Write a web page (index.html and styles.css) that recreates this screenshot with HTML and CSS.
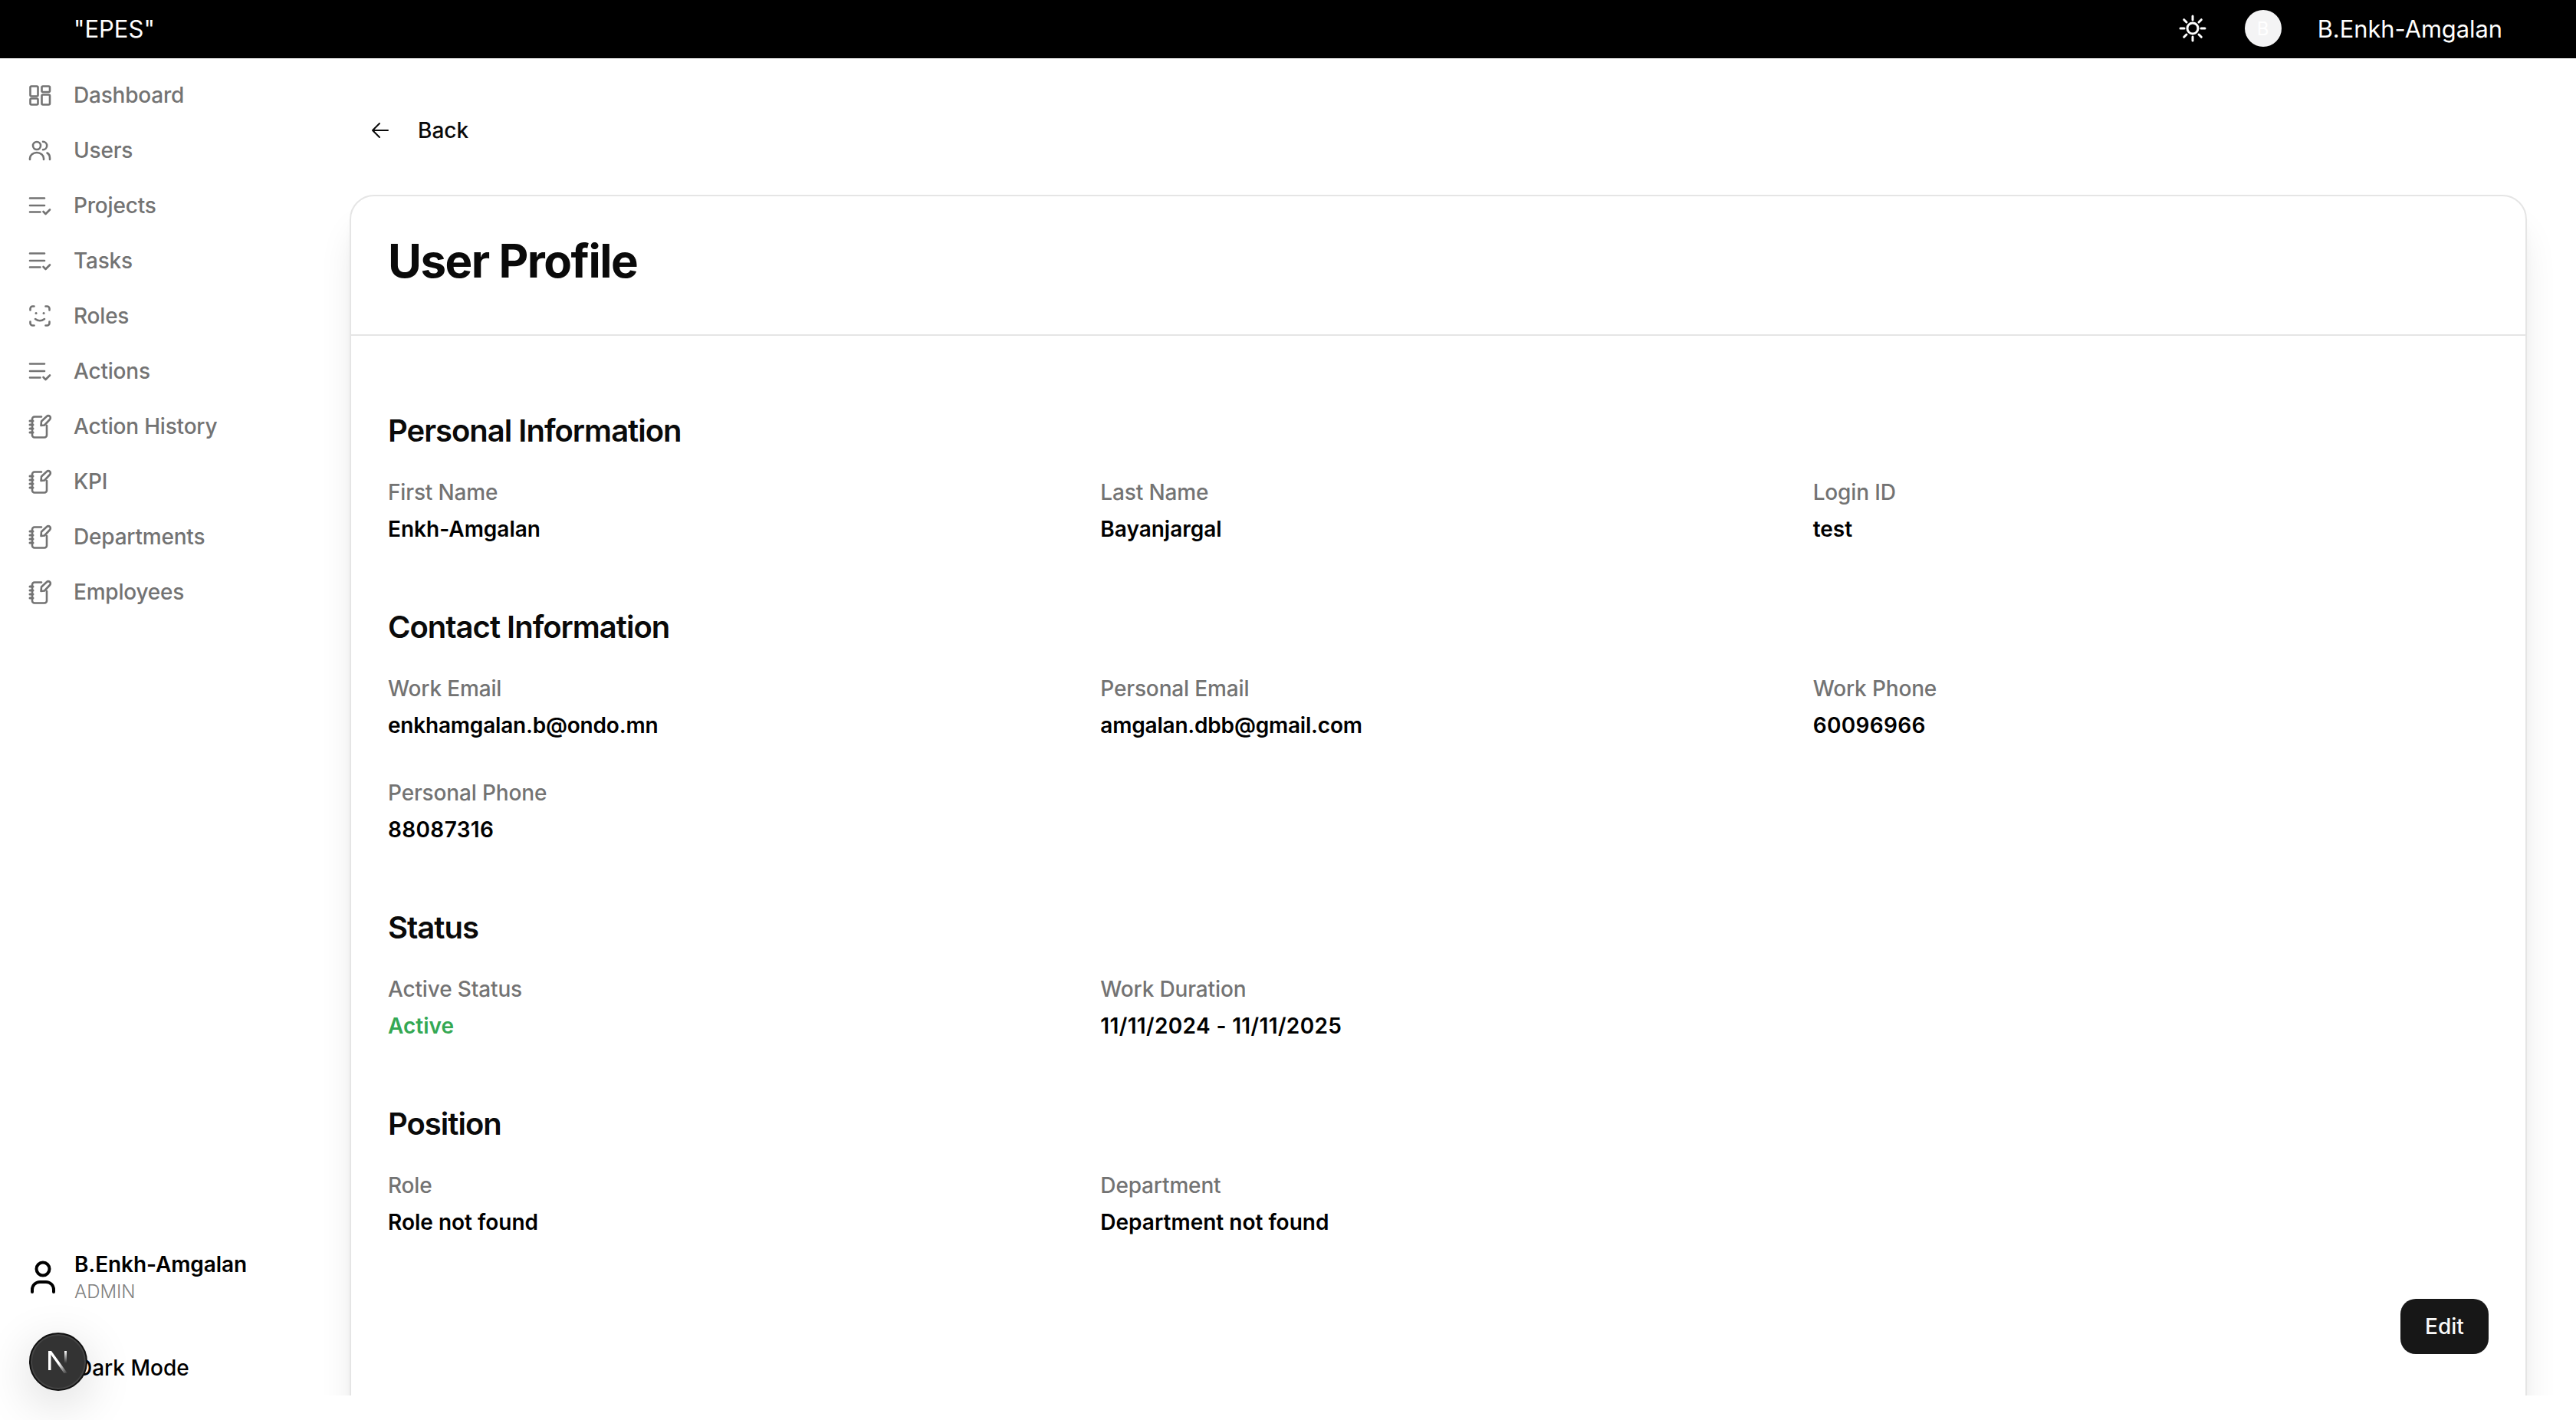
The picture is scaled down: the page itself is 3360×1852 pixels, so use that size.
FILE: index.html
```html
<!DOCTYPE html>
<html lang="en">
<head>
<meta charset="utf-8">
<title>User Profile</title>
<link rel="stylesheet" href="styles.css">
</head>
<body>
<svg class="defs" width="0" height="0" aria-hidden="true">
  <symbol id="i-dash" viewBox="0 0 32 32"><rect x="3.500" y="4.500" width="10" height="13" rx="1.500"/><rect x="3.500" y="20.500" width="10" height="8" rx="1.500"/><rect x="18.500" y="4.500" width="10.500" height="7.500" rx="1.500"/><rect x="18.500" y="15.500" width="10.500" height="13" rx="1.500"/></symbol>
  <symbol id="i-users" viewBox="0 0 32 32"><circle cx="12" cy="10" r="5"/><path d="M3 28v-1.500a9 7.500 0 0 1 18 0V28"/><path d="M20 4.800a5.200 5.200 0 0 1 0 10.400"/><path d="M25.500 19.500c2.300 1.300 3.500 3.700 3.500 6.500v2"/></symbol>
  <symbol id="i-list" viewBox="0 0 32 32"><path d="M3 6.500h19M3 16h19M3 24.500h13.500"/><path d="M20.500 24l3 3 5.500-5.500"/></symbol>
  <symbol id="i-face" viewBox="0 0 32 32"><path d="M3.500 8.500V6.500a3 3 0 0 1 3-3H8.500M23.500 3.500h2a3 3 0 0 1 3 3v2M28.500 23.500v2a3 3 0 0 1-3 3h-2M8.500 28.500h-2a3 3 0 0 1-3-3v-2"/><path d="M10 20q6 4.500 12 0"/><path class="dot" d="M11 12.500h.1M21 12.500h.1"/></symbol>
  <symbol id="i-note" viewBox="0 0 32 32"><path d="M18 3.500H9a3 3 0 0 0-3 3v21a3 3 0 0 0 3 3h13a3 3 0 0 0 3-3V15"/><path class="beads" d="M3 9h4M3 14h4M3 19h4M3 24h4"/><path d="M18 9.500l7-6.500a2.800 2.800 0 0 1 4 4l-7 7.500-4.500.5z"/></symbol>
</svg>

<div class="page">
  <header class="topbar">
    <span class="brand">"EPES"</span>
    <div class="topbar-right">
      <svg class="sun" viewBox="0 0 36 36"><circle cx="18" cy="18" r="7"/><path d="M18 2v5M18 29v5M2 18h5M29 18h5M6.700 6.700l3.300 3.300M26 26l3.300 3.300M6.700 29.300l3.300-3.300M26 10l3.300-3.300"/></svg>
      <span class="avatar">B</span>
      <span class="topbar-name">B.Enkh-Amgalan</span>
    </div>
  </header>

  <div class="shell">
    <aside class="sidebar">
      <nav class="nav">
        <a class="nav-item"><svg class="nav-icon"><use href="#i-dash"/></svg>Dashboard</a>
        <a class="nav-item"><svg class="nav-icon"><use href="#i-users"/></svg>Users</a>
        <a class="nav-item"><svg class="nav-icon"><use href="#i-list"/></svg>Projects</a>
        <a class="nav-item"><svg class="nav-icon"><use href="#i-list"/></svg>Tasks</a>
        <a class="nav-item"><svg class="nav-icon"><use href="#i-face"/></svg>Roles</a>
        <a class="nav-item"><svg class="nav-icon"><use href="#i-list"/></svg>Actions</a>
        <a class="nav-item"><svg class="nav-icon"><use href="#i-note"/></svg>Action History</a>
        <a class="nav-item"><svg class="nav-icon"><use href="#i-note"/></svg>KPI</a>
        <a class="nav-item"><svg class="nav-icon"><use href="#i-note"/></svg>Departments</a>
        <a class="nav-item"><svg class="nav-icon"><use href="#i-note"/></svg>Employees</a>
      </nav>
      <div class="side-foot">
        <div class="side-user">
          <svg class="person" viewBox="0 0 36 44"><circle cx="18" cy="12" r="8.500"/><path d="M4 42v-3a10 10 0 0 1 10-10h8a10 10 0 0 1 10 10v3"/></svg>
          <div class="side-user-text">
            <div class="side-name">B.Enkh-Amgalan</div>
            <div class="side-role">ADMIN</div>
          </div>
        </div>
        <div class="dark-mode">Dark Mode</div>
      </div>
    </aside>

    <main class="main">
      <a class="back">
        <svg class="back-icon" viewBox="0 0 24 24"><path d="M22 12H2M11 3l-9 9 9 9"/></svg>
        Back
      </a>
      <section class="card">
        <div class="card-head"><h1 class="title">User Profile</h1></div>
        <div class="card-body">
          <div class="group">
            <h2 class="group-title">Personal Information</h2>
            <div class="fields">
              <div class="field"><div class="label">First Name</div><div class="value">Enkh-Amgalan</div></div>
              <div class="field"><div class="label">Last Name</div><div class="value">Bayanjargal</div></div>
              <div class="field"><div class="label">Login ID</div><div class="value">test</div></div>
            </div>
          </div>
          <div class="group">
            <h2 class="group-title">Contact Information</h2>
            <div class="fields">
              <div class="field"><div class="label">Work Email</div><div class="value value-mail">enkhamgalan.b@ondo.mn</div></div>
              <div class="field"><div class="label">Personal Email</div><div class="value value-mail">amgalan.dbb@gmail.com</div></div>
              <div class="field"><div class="label">Work Phone</div><div class="value value-num">60096966</div></div>
              <div class="field"><div class="label">Personal Phone</div><div class="value value-num">88087316</div></div>
            </div>
          </div>
          <div class="group">
            <h2 class="group-title">Status</h2>
            <div class="fields">
              <div class="field"><div class="label">Active Status</div><div class="value value-ok">Active</div></div>
              <div class="field"><div class="label">Work Duration</div><div class="value value-num">11/11/2024 - 11/11/2025</div></div>
            </div>
          </div>
          <div class="group">
            <h2 class="group-title">Position</h2>
            <div class="fields">
              <div class="field"><div class="label">Role</div><div class="value">Role not found</div></div>
              <div class="field"><div class="label">Department</div><div class="value">Department not found</div></div>
            </div>
          </div>
          <div class="actions"><button class="edit">Edit</button></div>
        </div>
      </section>
    </main>
  </div>
</div>

<div class="next-badge">
  <svg class="next-n" viewBox="0 0 40 40"><defs><linearGradient id="n-fade" x1="0" y1="0" x2="1" y2="1"><stop offset="0.55" stop-color="#fff"/><stop offset="1" stop-color="#fff" stop-opacity="0"/></linearGradient><linearGradient id="n-fade2" x1="0" y1="0" x2="0" y2="1"><stop offset="0" stop-color="#fff"/><stop offset="0.8" stop-color="#fff" stop-opacity="0"/></linearGradient></defs><path d="M7 6h3.500v25H7z" fill="#fff"/><path d="M7 6h4l21 29h-4.500z" fill="url(#n-fade)"/><path d="M28 6h3v20h-3z" fill="url(#n-fade2)"/></svg>
</div>
</body>
</html>
```
FILE: styles.css
```css
* { box-sizing: border-box; }
html, body { margin: 0; padding: 0; height: 100%; background: #fff; }
body {
  font-family: Inter, "Liberation Sans", sans-serif;
  font-size: 28px;
  color: #000;
  overflow: hidden;
  position: relative;
}
.defs { position: absolute; }

.page {
  height: 1820px;
  display: flex;
  flex-direction: column;
  overflow: hidden;
}

.topbar {
  flex: none;
  height: 76px;
  background: #000;
  color: #fff;
  display: flex;
  align-items: center;
  justify-content: space-between;
  padding: 0 96px 2px 96px;
}
.brand { font-size: 31px; }
.topbar-right { display: flex; align-items: center; }
.sun { width: 36px; height: 36px; fill: none; stroke: #fff; stroke-width: 3; stroke-linecap: round; }
.avatar {
  width: 48px;
  height: 48px;
  margin-left: 50px;
  border-radius: 50%;
  background: #f4f4f5;
  color: #fff;
  display: flex;
  align-items: center;
  justify-content: center;
  font-size: 24px;
}
.topbar-name { margin-left: 47px; font-size: 30.800px; }

.shell { flex: 1; min-height: 0; display: flex; }

.sidebar {
  flex: none;
  width: 456px;
  display: flex;
  flex-direction: column;
  justify-content: space-between;
  padding: 12px 0 0 36px;
}
.nav { display: flex; flex-direction: column; }
.nav-item {
  height: 72px;
  display: flex;
  align-items: center;
  gap: 28px;
  color: #737373;
  font-weight: 500;
  letter-spacing: -0.200px;
}
.nav-icon {
  width: 32px;
  height: 32px;
  fill: none;
  stroke: #737373;
  stroke-width: 2.600;
  stroke-linecap: round;
  stroke-linejoin: round;
}
.dot { stroke-width: 3; }
.beads { stroke-width: 3; }

.side-foot { padding-bottom: 16px; }
.side-user { display: flex; align-items: center; gap: 23px; margin-left: 2px; }
.person { width: 36px; height: 44px; fill: none; stroke: #000; stroke-width: 4; stroke-linecap: round; }
.side-name { font-weight: 600; line-height: 40px; letter-spacing: -0.100px; }
.side-role { font-size: 24px; line-height: 32px; font-weight: 300; color: #808080; }
.dark-mode { margin: 63px 0 0 64px; line-height: 40px; font-weight: 500; }

.main { flex: 1; min-width: 0; padding: 0 64px 0 0; display: flex; flex-direction: column; }
.back {
  flex: none;
  display: flex;
  align-items: center;
  height: 76px;
  margin-top: 56px;
  padding-left: 28px;
  gap: 37px;
  font-weight: 500;
  color: #0a0a0a;
}
.back-icon { width: 24px; height: 24px; fill: none; stroke: #0a0a0a; stroke-width: 2; stroke-linecap: round; stroke-linejoin: round; }

.card {
  flex: none;
  margin-top: 46px;
  border: 2px solid #e5e5e5;
  border-radius: 32px;
  background: #fff;
  box-shadow: 0 40px 50px -10px rgba(0, 0, 0, 0.12), 0 16px 20px -12px rgba(0, 0, 0, 0.1);
}
.card-head { height: 182px; padding: 0 48px 12px; display: flex; align-items: center; border-bottom: 2px solid #e5e5e5; }
.title { margin: 0; font-size: 60px; line-height: 72px; font-weight: 700; color: #0a0a0a; letter-spacing: -1.500px; }
.card-body { padding: 96px 48px 96px; display: flex; flex-direction: column; gap: 80px; }
.group { display: flex; flex-direction: column; gap: 32px; }
.group-title { margin: 0; font-size: 40px; line-height: 56px; font-weight: 600; color: #0a0a0a; letter-spacing: -1px; }
.fields { display: grid; grid-template-columns: repeat(3, 1fr); gap: 48px; }
.field { display: flex; flex-direction: column; gap: 8px; }
.label { line-height: 40px; color: #737373; font-weight: 450; letter-spacing: -0.150px; }
.value { line-height: 40px; font-weight: 600; color: #000; }
.value-ok { color: #34a853; }
.value-num { letter-spacing: 0.350px; }
.value-mail { letter-spacing: -0.200px; }

.actions { display: flex; justify-content: flex-end; }
.edit {
  width: 115px;
  height: 72px;
  border: 0;
  border-radius: 20px;
  background: #171717;
  color: #fafafa;
  font: 500 28px Inter, "Liberation Sans", sans-serif;
}

.next-badge {
  position: absolute;
  left: 38px;
  top: 1738px;
  width: 76px;
  height: 76px;
  border-radius: 50%;
  background: #333;
  border: 2px solid #111;
  box-shadow: 0 16px 64px rgba(0, 0, 0, 0.16), inset 0 0 0 2px #444;
  display: flex;
  align-items: center;
  justify-content: center;
}
.next-n { width: 40px; height: 40px; }
```
